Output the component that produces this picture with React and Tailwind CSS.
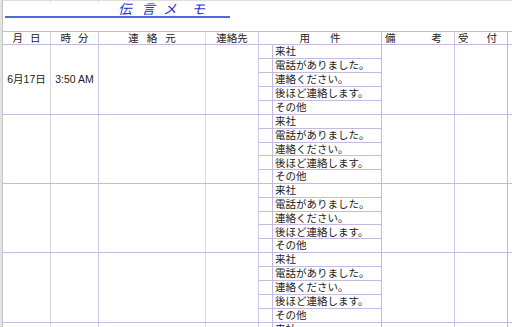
const font = { fontFamily: '"Liberation Sans", "Noto Sans CJK JP", sans-serif' }

const options = ['来社', '電話がありました。', '連絡ください。', '後ほど連絡します。', 'その他']

const blocks = [
  { h: 'h-[70px]', date: '6月17日', time: '3:50 AM' },
  { h: 'h-[69px]' },
  { h: 'h-[69px]' },
  { h: 'h-[70px]' },
  { h: 'h-[70px]' },
]

function Block({ h, date, time }) {
  return (
    <div className={`flex shrink-0 ${h} border-b border-[#c6b9de]`}>
      <div className="w-[48px] shrink-0 border-r border-[#d8d4dc] flex items-center justify-center text-[10.5px] text-[#222]">
        {date}
      </div>
      <div className="w-[48px] shrink-0 border-r border-[#d3c8e4] flex items-center justify-center text-[10.5px] text-[#222]">
        {time}
      </div>
      <div className="w-[107px] shrink-0 border-r border-[#dfdbe4]" />
      <div className="w-[53px] shrink-0 border-r border-[#d0c5e2]" />
      <div className="w-[123px] shrink-0 border-r border-[#c6b9de] flex flex-col">
        {options.map((o, i) => (
          <div key={o} className={`flex flex-1 ${i < 4 ? 'border-b border-[#c6b9de]' : ''}`}>
            <div className="w-[14px] shrink-0 border-r border-[#c6b9de]" />
            <div className="pl-[2px] flex items-center text-[10.5px] leading-none text-[#222]">{o}</div>
          </div>
        ))}
      </div>
      <div className="w-[73px] shrink-0 border-r border-[#d0c5e2]" />
      <div className="w-[53px] shrink-0 border-r border-[#c6b9de]" />
      <div className="flex-1" />
    </div>
  )
}

export default function App() {
  return (
    <div className="w-[512px] h-[327px] overflow-hidden bg-white flex" style={font}>
      <div className="w-[3px] shrink-0 bg-[#e4e4e4] border-r border-[#c4c4c4]" />
      <div className="flex-1 flex flex-col">
        <div className="h-[3px] shrink-0 border-t border-[#dedede] flex">
          <div className="w-[48px] border-r border-[#e0e0e0]" />
          <div className="w-[48px] border-r border-[#e0e0e0]" />
        </div>
        <div className="h-[28px] shrink-0 pl-[2px]">
          <div className="w-[225px] h-[15px] border-b-2 border-[#5565d8] flex items-end pl-[113px] text-[13.5px] italic leading-none text-[#1f35c8]">
            <span>伝</span>
            <span className="ml-[10px]">言</span>
            <span className="ml-[8px]">メ</span>
            <span className="ml-[15px]">モ</span>
          </div>
        </div>
        <div className="h-[14px] shrink-0 flex border-t border-b border-[#c6b9de] text-[10.5px] leading-none text-[#222]">
          <div className="w-[48px] shrink-0 border-r border-[#d8d4dc] flex items-center justify-center gap-[7px]">
            <span>月</span><span>日</span>
          </div>
          <div className="w-[48px] shrink-0 border-r border-[#d3c8e4] flex items-center justify-center gap-[7px]">
            <span>時</span><span>分</span>
          </div>
          <div className="w-[107px] shrink-0 border-r border-[#dfdbe4] flex items-center justify-center gap-[8px]">
            <span>連</span><span>絡</span><span>元</span>
          </div>
          <div className="w-[53px] shrink-0 border-r border-[#d0c5e2] flex items-center justify-center">
            連絡先
          </div>
          <div className="w-[123px] shrink-0 border-r border-[#c6b9de] flex items-center justify-center gap-[20px]">
            <span>用</span><span>件</span>
          </div>
          <div className="w-[73px] shrink-0 border-r border-[#d0c5e2] flex items-center pl-[3px] gap-[36px]">
            <span>備</span><span>考</span>
          </div>
          <div className="w-[53px] shrink-0 border-r border-[#c6b9de] flex items-center pl-[3px] gap-[18px]">
            <span>受</span><span>付</span>
          </div>
          <div className="flex-1" />
        </div>
        {blocks.map((b, i) => (
          <Block key={i} {...b} />
        ))}
      </div>
    </div>
  )
}
